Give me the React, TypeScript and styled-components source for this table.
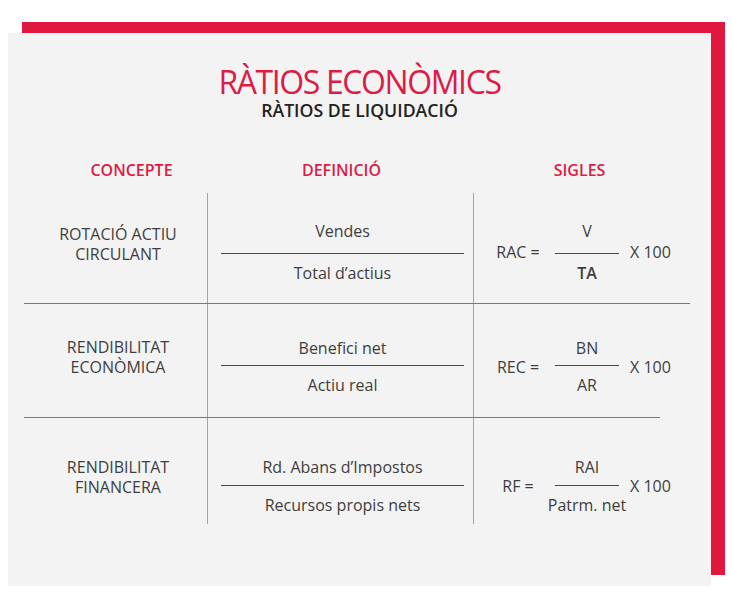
import React from 'react';
import styled, { createGlobalStyle } from 'styled-components';

const GlobalStyle = createGlobalStyle`
  html, body { margin: 0; padding: 0; background: #ffffff; }
  body { font-family: 'Open Sans', 'Liberation Sans', sans-serif; color: #3c3c3c; }
`;

const Page = styled.div`
  padding: 33px 0 0 8px;
  height: 567px;
`;

const Panel = styled.section`
  width: 703px;
  height: 553px;
  background: #f3f3f3;
  box-shadow: 14px -11px 0 0 #e0173f;
  padding-top: 33px;
  box-sizing: border-box;
  display: flex;
  flex-direction: column;
`;

const Title = styled.h1`
  margin: 0;
  font-size: 32px;
  line-height: 32px;
  font-weight: 500;
  letter-spacing: -1.4px;
  color: #dc1c44;
  text-align: center;
`;

const Subtitle = styled.h2`
  margin: 2px 0 0;
  font-size: 17.7px;
  line-height: 20px;
  font-weight: 600;
  color: #222222;
  text-align: center;
`;

const HeaderGrid = styled.div`
  display: grid;
  grid-template-columns: 183px 237px 239px;
  margin: 39px 0 0 32px;
`;

const HeaderCell = styled.div`
  font-size: 16px;
  line-height: 22px;
  font-weight: 600;
  color: #dc1c44;
  text-align: center;
`;

const Table = styled.div`
  display: flex;
  flex-direction: column;
  margin: 12px 0 0 16px;
`;

const Row = styled.div<{ $h: number; $w: number; $line: boolean }>`
  display: grid;
  grid-template-columns: 184px 266px 1fr;
  width: ${p => p.$w}px;
  height: ${p => p.$h}px;
  box-sizing: border-box;
  border-bottom: ${p => (p.$line ? '1px solid #e2456b' : 'none')};
`;

const ConceptCell = styled.div<{ $pad: number }>`
  border-right: 1px solid #ee809b;
  padding: ${p => p.$pad}px 0 0 5px;
  font-size: 16px;
  line-height: 20px;
  text-align: center;
  color: #3e3e3e;
`;

const DefCell = styled.div<{ $pad: number }>`
  border-right: 1px solid #ee809b;
  padding: ${p => p.$pad}px 9px 0 13px;
`;

const SiglesCell = styled.div<{ $pad: number }>`
  padding: ${p => p.$pad}px 0 0 12px;
  display: flex;
  align-items: center;
  align-self: start;
`;

const Fraction = styled.div<{ $w?: number }>`
  display: flex;
  flex-direction: column;
  align-items: center;
  width: ${p => (p.$w ? `${p.$w}px` : '100%')};
  font-size: 16px;
  line-height: 22px;
  color: #3e3e3e;
  white-space: nowrap;
`;

const Num = styled.div<{ $gap: number }>`
  margin-bottom: ${p => p.$gap}px;
`;

const Rule = styled.div`
  align-self: stretch;
  height: 1px;
  background: #4a4a4a;
`;

const Den = styled.div<{ $bold?: boolean }>`
  margin-top: 8px;
  font-weight: ${p => (p.$bold ? 600 : 400)};
`;

const Code = styled.div`
  width: 64px;
  margin-right: 5px;
  font-size: 16px;
  line-height: 22px;
  text-align: center;
  white-space: nowrap;
  color: #3e3e3e;
`;

const Times = styled.div`
  margin-left: 11px;
  font-size: 16px;
  line-height: 22px;
  white-space: nowrap;
  color: #3e3e3e;
`;

type RowData = {
  concept: string[];
  num: string;
  den: string;
  code: string;
  sNum: string;
  sDen: string;
  denBold?: boolean;
  h: number;
  w: number;
  line: boolean;
  conceptPad: number;
  fracPad: number;
  gap: number;
};

const rows: RowData[] = [
  {
    concept: ['ROTACIÓ ACTIU', 'CIRCULANT'],
    num: 'Vendes',
    den: 'Total d’actius',
    code: 'RAC =',
    sNum: 'V',
    sDen: 'TA',
    denBold: true,
    h: 111,
    w: 666,
    line: true,
    conceptPad: 31,
    fracPad: 27,
    gap: 11,
  },
  {
    concept: ['RENDIBILITAT', 'ECONÒMICA'],
    num: 'Benefici net',
    den: 'Actiu real',
    code: 'REC =',
    sNum: 'BN',
    sDen: 'AR',
    h: 114,
    w: 636,
    line: true,
    conceptPad: 33,
    fracPad: 33,
    gap: 6,
  },
  {
    concept: ['RENDIBILITAT', 'FINANCERA'],
    num: 'Rd. Abans d’Impostos',
    den: 'Recursos propis nets',
    code: 'RF =',
    sNum: 'RAI',
    sDen: 'Patrm. net',
    h: 106,
    w: 636,
    line: false,
    conceptPad: 39,
    fracPad: 38,
    gap: 7,
  },
];

export default function App() {
  return (
    <>
      <GlobalStyle />
      <Page>
        <Panel>
          <Title>RÀTIOS ECONÒMICS</Title>
          <Subtitle>RÀTIOS DE LIQUIDACIÓ</Subtitle>
          <HeaderGrid>
            <HeaderCell>CONCEPTE</HeaderCell>
            <HeaderCell>DEFINICIÓ</HeaderCell>
            <HeaderCell>SIGLES</HeaderCell>
          </HeaderGrid>
          <Table>
            {rows.map(r => (
              <Row key={r.code} $h={r.h} $w={r.w} $line={r.line}>
                <ConceptCell $pad={r.conceptPad}>
                  {r.concept.map(c => (
                    <div key={c}>{c}</div>
                  ))}
                </ConceptCell>
                <DefCell $pad={r.fracPad}>
                  <Fraction>
                    <Num $gap={r.gap}>{r.num}</Num>
                    <Rule />
                    <Den>{r.den}</Den>
                  </Fraction>
                </DefCell>
                <SiglesCell $pad={r.fracPad}>
                  <Code>{r.code}</Code>
                  <Fraction $w={64}>
                    <Num $gap={r.gap}>{r.sNum}</Num>
                    <Rule />
                    <Den $bold={r.denBold}>{r.sDen}</Den>
                  </Fraction>
                  <Times>X 100</Times>
                </SiglesCell>
              </Row>
            ))}
          </Table>
        </Panel>
      </Page>
    </>
  );
}
